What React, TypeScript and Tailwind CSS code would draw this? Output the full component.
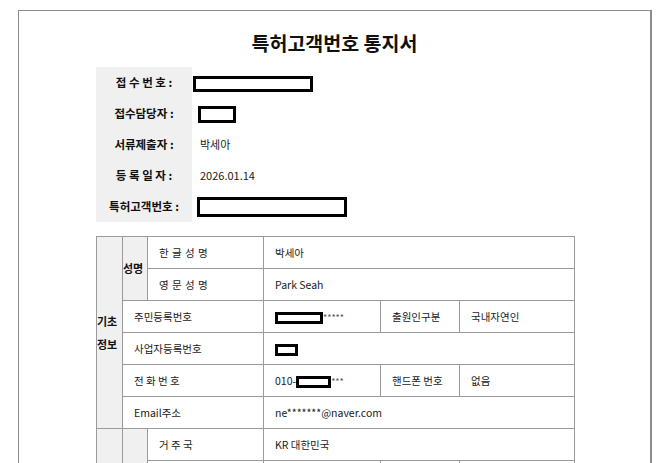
import React from "react";

const font = "font-['Noto_Sans_CJK_KR','Noto_Sans',sans-serif]";

function Redact({ w, h }: { w: number; h: number }) {
  return (
    <span
      className="inline-block border-[3px] border-black bg-white align-middle"
      style={{ width: w, height: h }}
    />
  );
}

const infoRows: { label: string; value: React.ReactNode }[] = [
  { label: "접 수 번 호 :", value: <span className="-ml-[7px]"><Redact w={120} h={16} /></span> },
  { label: "접수담당자 :", value: <span className="-ml-[2px]"><Redact w={38} h={17} /></span> },
  { label: "서류제출자 :", value: "박세아" },
  { label: "등 록 일 자 :", value: "2026.01.14" },
  { label: "특허고객번호 :", value: <span className="-ml-[3px]"><Redact w={150} h={20} /></span> },
];

const cell = "border border-[#9a9a9a] h-[32px] align-middle text-left whitespace-nowrap";
const td = `${cell} px-[11px]`;
const gray = `${cell} bg-[#f0f0f0] px-0 text-center font-bold text-[#111]`;

export default function App() {
  return (
    <div className={`h-[463px] w-[658px] overflow-hidden bg-white pl-[18px] pt-[10px] ${font}`}>
      <div className="h-[520px] w-[634px] border border-r-2 border-b-0 border-[#8c8c8c] text-[#1a1a1a]">
        {/* title */}
        <h1 className="mt-[19px] h-[25px] text-center text-[19.5px] font-bold leading-[25px] text-[#111]">
          특허고객번호 통지서
        </h1>

        {/* receipt info */}
        <div className="ml-[77px] mt-[12px] flex w-fit flex-col bg-[linear-gradient(to_right,#f0f0f0_96px,transparent_96px)]">
          {infoRows.map((r) => (
            <div key={r.label} className="flex h-[31px] items-center">
              <div className="w-[96px] text-center text-[11.5px] font-bold text-[#111]">{r.label}</div>
              <div className="pl-[8px] text-[11px]">{r.value}</div>
            </div>
          ))}
        </div>

        {/* basic info table */}
        <table className="ml-[77px] mt-[14px] w-[478px] table-fixed border-collapse text-[10.5px]">
          <colgroup>
            <col className="w-[26px]" />
            <col className="w-[25px]" />
            <col className="w-[116px]" />
            <col className="w-[117px]" />
            <col className="w-[79px]" />
            <col className="w-[115px]" />
          </colgroup>
          <tbody>
            <tr>
              <td rowSpan={6} className={`${gray} text-[11px] leading-[23px]`}>
                기초
                <br />
                정보
              </td>
              <td rowSpan={2} className={`${gray} text-[11px]`}>
                성명
              </td>
              <td className={`${td} tracking-[0.5px]`}>한 글 성 명</td>
              <td colSpan={3} className={td}>박세아</td>
            </tr>
            <tr>
              <td className={`${td} tracking-[0.5px]`}>영 문 성 명</td>
              <td colSpan={3} className={td}>Park Seah</td>
            </tr>
            <tr>
              <td colSpan={2} className={td}>주민등록번호</td>
              <td className={td}>
                <Redact w={48} h={12} />
                <span className="text-[9px] text-[#555]">*****</span>
              </td>
              <td className={td}>출원인구분</td>
              <td className={td}>국내자연인</td>
            </tr>
            <tr>
              <td colSpan={2} className={td}>사업자등록번호</td>
              <td colSpan={3} className={td}>
                <Redact w={23} h={12} />
              </td>
            </tr>
            <tr>
              <td colSpan={2} className={td}>전 화 번 호</td>
              <td className={td}>
                010-<Redact w={35} h={12} />
                <span className="text-[9px] text-[#555]">***</span>
              </td>
              <td className={td}>핸드폰 번호</td>
              <td className={td}>없음</td>
            </tr>
            <tr>
              <td colSpan={2} className={td}>Email주소</td>
              <td colSpan={3} className={td}>ne*******@naver.com</td>
            </tr>
            <tr>
              <td rowSpan={3} className={gray} />
              <td rowSpan={3} className={gray} />
              <td className={td}>거 주 국</td>
              <td colSpan={3} className={td}>KR 대한민국</td>
            </tr>
            <tr>
              <td className={td}>&nbsp;</td>
              <td className={td}>&nbsp;</td>
              <td className={td}>&nbsp;</td>
              <td className={td}>&nbsp;</td>
            </tr>
          </tbody>
        </table>
      </div>
    </div>
  );
}
